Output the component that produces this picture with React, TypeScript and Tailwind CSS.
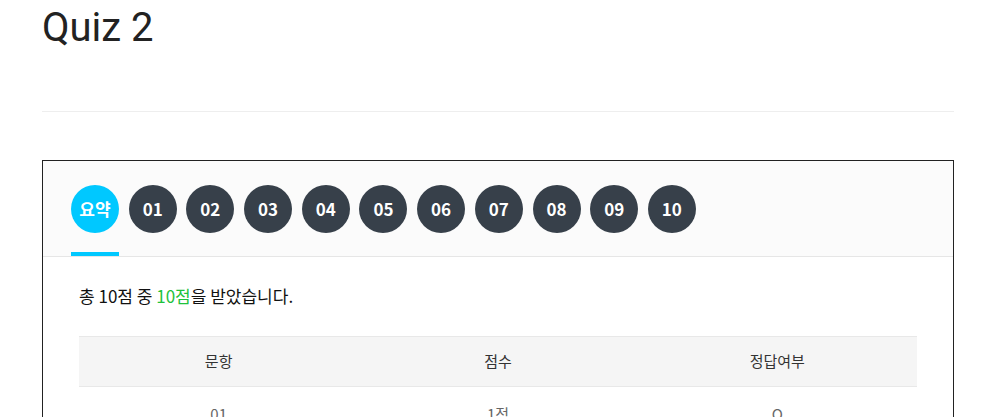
import { useState } from 'react';

const tabs = ['요약', '01', '02', '03', '04', '05', '06', '07', '08', '09', '10'];

const rows = Array.from({ length: 10 }, (_, i) => ({
  no: String(i + 1).padStart(2, '0'),
  score: '1점',
  result: 'O',
}));

export default function App() {
  const [active, setActive] = useState(0);

  return (
    <div className="min-h-screen bg-white font-['Noto_Sans_CJK_KR',sans-serif] text-[#222]">
      <div className="ml-[42px] w-[912px]">
        {/* 제목 */}
        <h1 className="pt-[4px] font-['Roboto','Noto_Sans_CJK_KR',sans-serif] text-[40px] leading-[48px] font-normal text-[#222]">
          Quiz 2
        </h1>
        <div className="mt-[59px] border-t border-[#eeeeee]" />

        {/* 결과 박스 */}
        <div className="mt-[48px] border border-[#222]">
          <div className="flex gap-[9.7px] border-b border-[#e6e6e6] bg-[#fbfbfb] pl-[28px] pt-[24px]">
            {tabs.map((t, i) => {
              const on = active === i;
              return (
                <button
                  key={t}
                  onClick={() => setActive(i)}
                  className="flex w-[48px] flex-col items-center"
                >
                  <span
                    className={`flex h-[48px] w-[48px] items-center justify-center rounded-full text-[17px] font-bold text-white ${
                      on ? 'bg-[#00c8ff]' : 'bg-[#37404a]'
                    }`}
                  >
                    {t}
                  </span>
                  <span className={`mt-[19px] h-[4px] w-full ${on ? 'bg-[#00c8ff]' : ''}`} />
                </button>
              );
            })}
          </div>

          <div className="px-[36px] pt-[27px]">
            <p className="text-[17px] leading-[24px] font-normal text-[#111]">
              총 10점 중 <span className="text-[#1fc23c]">10점</span>을 받았습니다.
            </p>

            <table className="mt-[28px] w-full table-fixed border-collapse text-center text-[15px]">
              <thead>
                <tr className="border-y border-[#e8e8e8] bg-[#f5f5f5] text-[#333]">
                  <th className="h-[50px] font-normal">문항</th>
                  <th className="h-[50px] font-normal">점수</th>
                  <th className="h-[50px] font-normal">정답여부</th>
                </tr>
              </thead>
              <tbody className="text-[#666]">
                {rows.map((r) => (
                  <tr key={r.no} className="border-b border-[#eeeeee]">
                    <td className="h-[56px]">{r.no}</td>
                    <td className="h-[56px]">{r.score}</td>
                    <td className="h-[56px]">{r.result}</td>
                  </tr>
                ))}
              </tbody>
            </table>
          </div>
        </div>
      </div>
    </div>
  );
}
